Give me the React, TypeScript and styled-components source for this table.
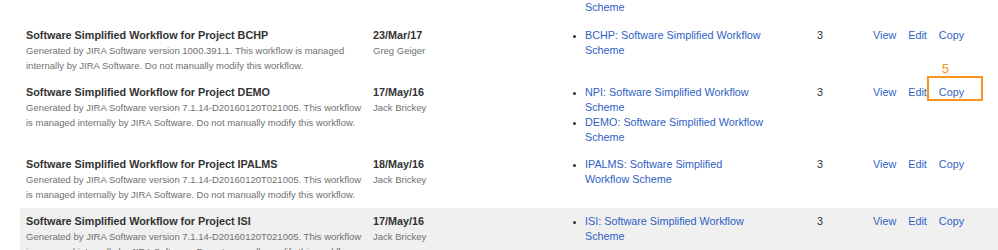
import React from 'react';
import styled, {createGlobalStyle} from 'styled-components';

const Global = createGlobalStyle`
  body {
    margin: 0;
    background: #fff;
    font-family: 'Liberation Sans', Arial, sans-serif;
    overflow: hidden;
  }
`;

const Page = styled.div`
  width: 998px;
  height: 250px;
  overflow: hidden;
  padding-left: 20px;
  box-sizing: border-box;
`;

const Table = styled.table`
  border-collapse: collapse;
  table-layout: fixed;
  width: 978px;
  font-size: 10.8px;
  line-height: 15px;
  color: #333;
`;

const Row = styled.tr<{$shaded?: boolean}>`
  background: ${(p) => (p.$shaded ? '#f0f0f0' : 'transparent')};
`;

const Cell = styled.td<{$first?: boolean}>`
  vertical-align: top;
  padding: ${(p) => (p.$first ? '0 8px 7px 6px' : '6px 8px 6px 6px')};
  &:first-child {
    padding-right: 0;
  }
`;

const Title = styled.div`
  font-weight: bold;
  color: #333;
`;

const Muted = styled.div`
  color: #707070;
  font-size: 9.5px;
`;

const Schemes = styled.ul<{$plain?: boolean}>`
  margin: 0;
  padding-left: 12px;
  max-width: 180px;
  list-style: ${(p) => (p.$plain ? 'none' : 'disc')};
  li::marker {
    color: #333;
    font-size: 9px;
  }
`;

const SchemeLink = styled.a`
  color: #2f5fc4;
  text-decoration: none;
`;

const Ops = styled.div`
  display: flex;
  gap: 12px;
`;

const OpLink = styled.a`
  position: relative;
  color: #2f5fc4;
  text-decoration: none;
`;

const Highlight = styled.span`
  position: absolute;
  left: -12px;
  top: -9px;
  width: 56px;
  height: 25px;
  border: 2px solid #f7931e;
  box-sizing: border-box;
  pointer-events: none;
`;

const Step = styled.span`
  position: absolute;
  left: 13px;
  top: -17px;
  color: #f7931e;
  font-size: 13px;
  line-height: 15px;
`;

type Workflow = {
  project: string;
  description: string;
  date: string;
  author: string;
  schemes: string[];
  marked?: boolean;
  shaded?: boolean;
};

const workflows: Workflow[] = [
  {
    project: 'BCHP',
    description:
      'Generated by JIRA Software version 1000.391.1. This workflow is managed internally by JIRA Software. Do not manually modify this workflow.',
    date: '23/Mar/17',
    author: 'Greg Geiger',
    schemes: ['BCHP: Software Simplified Workflow Scheme'],
  },
  {
    project: 'DEMO',
    description:
      'Generated by JIRA Software version 7.1.14-D20160120T021005. This workflow is managed internally by JIRA Software. Do not manually modify this workflow.',
    date: '17/May/16',
    author: 'Jack Brickey',
    schemes: [
      'NPI: Software Simplified Workflow Scheme',
      'DEMO: Software Simplified Workflow Scheme',
    ],
    marked: true,
  },
  {
    project: 'IPALMS',
    description:
      'Generated by JIRA Software version 7.1.14-D20160120T021005. This workflow is managed internally by JIRA Software. Do not manually modify this workflow.',
    date: '18/May/16',
    author: 'Jack Brickey',
    schemes: ['IPALMS: Software Simplified Workflow Scheme'],
  },
  {
    project: 'ISI',
    description:
      'Generated by JIRA Software version 7.1.14-D20160120T021005. This workflow is managed internally by JIRA Software. Do not manually modify this workflow.',
    date: '17/May/16',
    author: 'Jack Brickey',
    schemes: ['ISI: Software Simplified Workflow Scheme'],
    shaded: true,
  },
];

function Workflow_Row({item}: {item: Workflow}) {
  return (
    <Row $shaded={item.shaded}>
      <Cell>
        <Title>Software Simplified Workflow for Project {item.project}</Title>
        <Muted>{item.description}</Muted>
      </Cell>
      <Cell>
        <Title>{item.date}</Title>
        <Muted>{item.author}</Muted>
      </Cell>
      <Cell>
        <Schemes>
          {item.schemes.map((s) => (
            <li key={s}>
              <SchemeLink href='#'>{s}</SchemeLink>
            </li>
          ))}
        </Schemes>
      </Cell>
      <Cell>3</Cell>
      <Cell>
        <Ops>
          <OpLink href='#'>View</OpLink>
          <OpLink href='#'>Edit</OpLink>
          <OpLink href='#'>
            Copy
            {item.marked && (
              <Highlight>
                <Step>5</Step>
              </Highlight>
            )}
          </OpLink>
        </Ops>
      </Cell>
    </Row>
  );
}

export default function App() {
  return (
    <Page>
      <Global />
      <Table>
        <colgroup>
          <col style={{width: 347}} />
          <col style={{width: 200}} />
          <col style={{width: 244}} />
          <col style={{width: 56}} />
          <col />
        </colgroup>
        <tbody>
          <Row>
            <Cell $first />
            <Cell $first />
            <Cell $first>
              <Schemes $plain>
                <li>
                  <SchemeLink href='#'>Scheme</SchemeLink>
                </li>
              </Schemes>
            </Cell>
            <Cell $first />
            <Cell $first />
          </Row>
          {workflows.map((w) => (
            <Workflow_Row item={w} key={w.project} />
          ))}
        </tbody>
      </Table>
    </Page>
  );
}
